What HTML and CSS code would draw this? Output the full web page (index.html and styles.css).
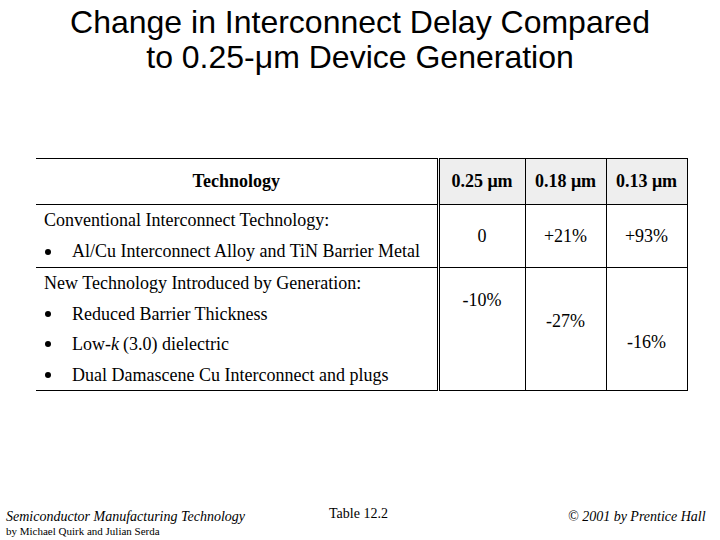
FILE: index.html
```html
<!DOCTYPE html>
<html>
<head>
<meta charset="utf-8">
<link rel="stylesheet" href="styles.css">
</head>
<body>
<div class="slide">
  <h1 class="title">Change in Interconnect Delay Compared<br>to 0.25-μm Device Generation</h1>
  <table class="data">
    <colgroup>
      <col class="c-tech">
      <col class="c-num1">
      <col class="c-num">
      <col class="c-num">
    </colgroup>
    <thead>
      <tr>
        <th class="h-tech">Technology</th>
        <th class="h-num">0.25 μm</th>
        <th class="h-num">0.18 μm</th>
        <th class="h-num">0.13 μm</th>
      </tr>
    </thead>
    <tbody>
      <tr class="r1">
        <td class="tech">
          <div>Conventional Interconnect Technology:</div>
          <div class="item"><span class="dot"></span>Al/Cu Interconnect Alloy and TiN Barrier Metal</div>
        </td>
        <td class="num mid">0</td>
        <td class="num mid">+21%</td>
        <td class="num mid">+93%</td>
      </tr>
      <tr class="r2">
        <td class="tech">
          <div>New Technology Introduced by Generation:</div>
          <div class="item"><span class="dot"></span>Reduced Barrier Thickness</div>
          <div class="item"><span class="dot"></span>Low-<i class="k">k</i> (3.0) dielectric</div>
          <div class="item"><span class="dot"></span>Dual Damascene Cu Interconnect and plugs</div>
        </td>
        <td class="num top step1">-10%</td>
        <td class="num top step2">-27%</td>
        <td class="num top step3">-16%</td>
      </tr>
    </tbody>
  </table>
  <div class="footer">
    <div class="book">
      <div class="book-title">Semiconductor Manufacturing Technology</div>
      <div class="authors">by Michael Quirk and Julian Serda</div>
    </div>
    <div class="tableref">Table 12.2</div>
    <div class="copy">© 2001 by Prentice Hall</div>
  </div>
</div>
</body>
</html>
```
FILE: styles.css
```css
html, body {
  margin: 0;
  padding: 0;
  background: #ffffff;
}
.slide {
  width: 720px;
  height: 540px;
  display: flex;
  flex-direction: column;
  color: #000;
  overflow: hidden;
}
.title {
  margin: 5px 0 0 0;
  font-family: "Liberation Sans", Arial, sans-serif;
  font-weight: normal;
  font-size: 32px;
  line-height: 35px;
  text-align: center;
}
.data {
  margin: 83px 0 0 36px;
  width: 650px;
  border-collapse: collapse;
  table-layout: fixed;
  font-family: "Liberation Serif", "Times New Roman", serif;
  font-size: 18px;
}
.c-tech { width: 402px; }
.c-num1 { width: 87px; }
.c-num { width: 81px; }
.data th, .data td {
  border: 1px solid #000;
  padding: 0;
}
.data th:first-child, .data td:first-child {
  border-left: none;
  border-right: 3px double #000;
}
.data th {
  height: 45px;
  font-weight: bold;
  text-align: center;
  vertical-align: middle;
}
.h-num {
  background: #eeeeee;
}
.tech {
  padding-left: 8px !important;
  line-height: 31px;
  vertical-align: top;
}
.r2 .tech {
  line-height: 30.5px;
}
.item {
  display: flex;
  align-items: center;
}
.k {
  margin-right: 4px;
}
.dot {
  display: inline-block;
  width: 6px;
  height: 6px;
  border-radius: 50%;
  background: #000;
  margin: 0 21px 0 1px;
}
.num {
  text-align: center;
}
.mid {
  vertical-align: middle;
}
.top {
  vertical-align: top;
  line-height: 20px;
}
.step1 { padding-top: 22px !important; }
.step2 { padding-top: 43px !important; }
.step3 { padding-top: 64px !important; }
.footer {
  margin-top: auto;
  height: 40px;
  display: flex;
  font-family: "Liberation Serif", "Times New Roman", serif;
}
.book {
  width: 323px;
  padding-left: 6px;
  padding-top: 9px;
}
.book-title {
  font-style: italic;
  font-size: 14px;
  line-height: 15px;
}
.authors {
  font-size: 11px;
  line-height: 15px;
}
.tableref {
  width: 239px;
  font-size: 14px;
  padding-top: 6px;
}
.copy {
  font-style: italic;
  font-size: 14px;
  padding-top: 9px;
}
```
